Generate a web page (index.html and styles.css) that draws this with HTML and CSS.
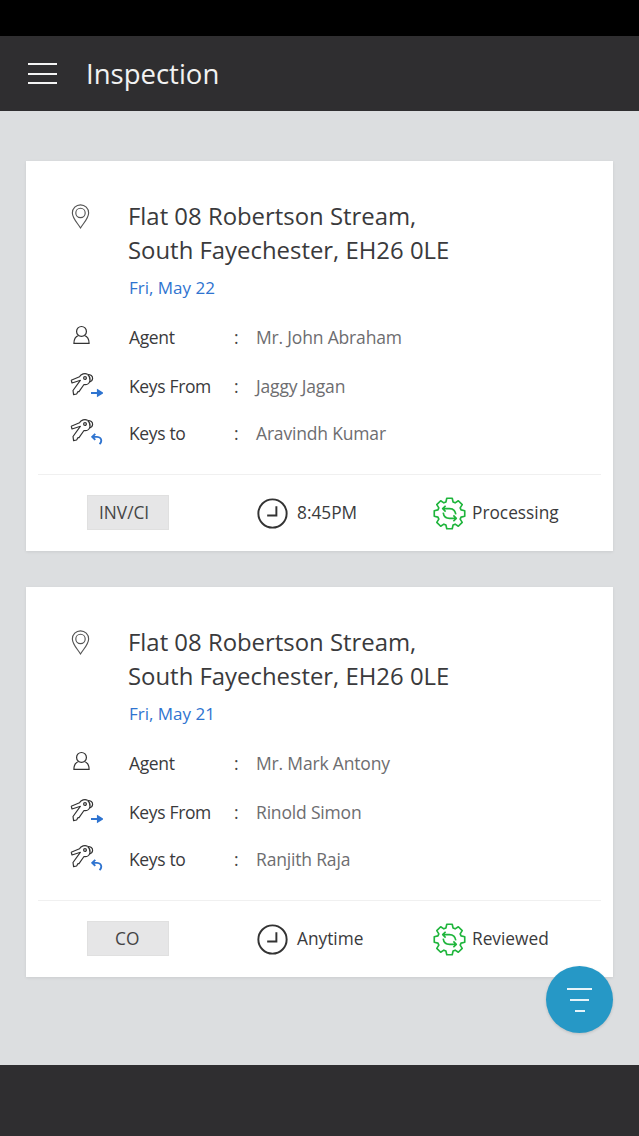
FILE: index.html
```html
<!DOCTYPE html>
<html lang="en">
<head>
<meta charset="utf-8">
<title>Inspection</title>
<link rel="stylesheet" href="styles.css">
</head>
<body>
<svg class="defs" width="0" height="0" aria-hidden="true">
  <symbol id="pin" viewBox="0 0 18 24">
    <path d="M9 23C5.5 17.5 1.2 13.5 1.2 8.6A7.8 7.8 0 0 1 16.8 8.6C16.8 13.5 12.5 17.5 9 23Z" fill="none" stroke="#555" stroke-width="1.1"/>
    <circle cx="9" cy="8.6" r="4.5" fill="none" stroke="#555" stroke-width="1.1"/>
  </symbol>
  <symbol id="person" viewBox="0 0 18 20">
    <circle cx="9" cy="6.2" r="5.2" fill="none" stroke="#333" stroke-width="1.3"/>
    <path d="M6 10.5C2.5 11.5 1 14 1 18.8H17C17 14 15.5 11.5 12 10.5" fill="none" stroke="#333" stroke-width="1.3"/>
  </symbol>
  <symbol id="keys" viewBox="0 0 24 24">
    <g fill="none" stroke="#333" stroke-width="1.2" stroke-linejoin="round">
      <path d="M1.2 8.2L9.5 4.8C11 1.8 15 .8 17.5 2.2M1.2 8.2L2 11L10.5 8.2"/>
      <path d="M10.5 8.2L3 18.5L3.6 22.6L6.6 22L8 19.6L9 19.6L14 12.5C17 13 19.5 11.5 20 8.5C20.3 6 19 3.5 17.5 2.2"/>
      <path d="M18 2.5C20.5 2.5 22.8 4 22.6 6.5C22.4 8.5 21 9.5 19.8 9.8"/>
      <circle cx="15" cy="6" r="1.4"/>
    </g>
  </symbol>
  <symbol id="clock" viewBox="0 0 32 32">
    <circle cx="16" cy="16" r="14.6" fill="none" stroke="#333" stroke-width="2"/>
    <path d="M20 8.5V18H10.5" fill="none" stroke="#333" stroke-width="2"/>
  </symbol>
  <symbol id="gear" viewBox="-17 -17 34 34">
    <g fill="none" stroke="#1fb53c" stroke-width="1.7" stroke-linejoin="round">
      <path d="M-3.7 -11.9L-2.8 -15.7H2.8L3.7 -11.9L5.8 -11L9.1 -13.1L13.1 -9.1L11 -5.8L11.9 -3.7L15.7 -2.8V2.8L11.9 3.7L11 5.8L13.1 9.1L9.1 13.1L5.8 11L3.7 11.9L2.8 15.7H-2.8L-3.7 11.9L-5.8 11L-9.1 13.1L-13.1 9.1L-11 5.8L-11.9 3.7L-15.7 2.8V-2.8L-11.9 -3.7L-11 -5.8L-13.1 -9.1L-9.1 -13.1L-5.8 -11Z"/>
      <path d="M-7 -5H0C3.5 -5 6 -2.5 6.5 1M-4 -8L-7 -5L-4 -2"/>
      <path d="M-6.5 -1C-6 2.5 -3.5 5 0 5H7M4 2L7 5L4 8"/>
    </g>
  </symbol>
</svg>

<div class="statusbar"></div>
<header class="topbar">
  <div class="burger"><span></span><span></span><span></span></div>
  <h1 class="title">Inspection</h1>
</header>

<main class="list">
  <article class="card">
    <div class="details">
      <div class="head">
        <svg class="pin"><use href="#pin"/></svg>
        <div>
          <h2 class="address">Flat 08 Robertson Stream,<br>South Fayechester, EH26 0LE</h2>
          <p class="date">Fri, May 22</p>
        </div>
      </div>
      <div class="row row-agent">
        <svg class="person"><use href="#person"/></svg>
        <span class="label">Agent</span><span class="colon">:</span><span class="value">Mr. John Abraham</span>
      </div>
      <div class="row row-from">
        <span class="keyicon"><svg class="keys"><use href="#keys"/></svg><svg class="mini" viewBox="0 0 14 10"><path d="M0 5H8M8 2L13 5L8 8Z" fill="#2f74d0" stroke="#2f74d0" stroke-width="2.2"/></svg></span>
        <span class="label">Keys From</span><span class="colon">:</span><span class="value">Jaggy Jagan</span>
      </div>
      <div class="row row-to">
        <span class="keyicon"><svg class="keys"><use href="#keys"/></svg><svg class="mini" viewBox="0 0 14 14"><path d="M5 1L1.5 4.5L5 8M2 4.5H7C10.5 4.5 12 7 12 9C12 11 11 12 10 13" fill="none" stroke="#2f74d0" stroke-width="2.2"/></svg></span>
        <span class="label">Keys to</span><span class="colon">:</span><span class="value">Aravindh Kumar</span>
      </div>
    </div>
    <div class="foot">
      <span class="chip">INV/CI</span>
      <span class="time"><svg class="clock"><use href="#clock"/></svg><span class="foot-text">8:45PM</span></span>
      <span class="status"><svg class="gear"><use href="#gear"/></svg><span class="foot-text">Processing</span></span>
    </div>
  </article>

  <article class="card">
    <div class="details">
      <div class="head">
        <svg class="pin"><use href="#pin"/></svg>
        <div>
          <h2 class="address">Flat 08 Robertson Stream,<br>South Fayechester, EH26 0LE</h2>
          <p class="date">Fri, May 21</p>
        </div>
      </div>
      <div class="row row-agent">
        <svg class="person"><use href="#person"/></svg>
        <span class="label">Agent</span><span class="colon">:</span><span class="value">Mr. Mark Antony</span>
      </div>
      <div class="row row-from">
        <span class="keyicon"><svg class="keys"><use href="#keys"/></svg><svg class="mini" viewBox="0 0 14 10"><path d="M0 5H8M8 2L13 5L8 8Z" fill="#2f74d0" stroke="#2f74d0" stroke-width="2.2"/></svg></span>
        <span class="label">Keys From</span><span class="colon">:</span><span class="value">Rinold Simon</span>
      </div>
      <div class="row row-to">
        <span class="keyicon"><svg class="keys"><use href="#keys"/></svg><svg class="mini" viewBox="0 0 14 14"><path d="M5 1L1.5 4.5L5 8M2 4.5H7C10.5 4.5 12 7 12 9C12 11 11 12 10 13" fill="none" stroke="#2f74d0" stroke-width="2.2"/></svg></span>
        <span class="label">Keys to</span><span class="colon">:</span><span class="value">Ranjith Raja</span>
      </div>
    </div>
    <div class="foot">
      <span class="chip chip-co">CO</span>
      <span class="time"><svg class="clock"><use href="#clock"/></svg><span class="foot-text">Anytime</span></span>
      <span class="status"><svg class="gear"><use href="#gear"/></svg><span class="foot-text">Reviewed</span></span>
    </div>
  </article>
</main>

<button class="fab" aria-label="Filter"><span></span><span></span><span></span></button>
<footer class="bottombar"></footer>
</body>
</html>
```
FILE: styles.css
```css
* { box-sizing: border-box; }
html, body { margin: 0; padding: 0; }
body {
  position: relative;
  width: 639px;
  height: 1136px;
  overflow: hidden;
  display: flex;
  flex-direction: column;
  background: #dcdee0;
  font-family: "Open Sans", "Noto Sans", sans-serif;
  color: #333;
}
.defs { position: absolute; }
.statusbar { height: 36px; background: #000; flex: none; }
.topbar {
  height: 75px;
  flex: none;
  background: #2f2e30;
  display: flex;
  align-items: center;
  padding-left: 28px;
  gap: 29px;
}
.burger { width: 29px; display: flex; flex-direction: column; gap: 7.5px; }
.burger span { height: 2px; background: #f4f4f4; }
.title { margin: 0; font-size: 27.5px; font-weight: 400; color: #f2f2f2; line-height: 36px; }
.list {
  flex: 1;
  padding: 50px 26px 0;
  display: flex;
  flex-direction: column;
  gap: 36px;
}
.card {
  height: 390px;
  background: #fff;
  box-shadow: 0 1px 3px rgba(0,0,0,.08);
  display: flex;
  flex-direction: column;
}
.details { height: 314px; padding: 38px 0 0 33px; border-bottom: 1px solid #f0f0f0; margin: 0 12px; }
.head { display: flex; }
.pin { width: 19px; height: 25px; margin-top: 5px; margin-right: 38px; flex: none; }
.address { margin: 0; font-size: 23.9px; font-weight: 400; line-height: 34px; color: #3a3a3c; }
.date { margin: 9px 0 0 1px; font-size: 17px; line-height: 24px; color: #2f74d0; }
.row { display: flex; align-items: center; height: 30px; font-size: 17.5px; position: relative; }
.row-agent { margin-top: 22px; }
.row-from { margin-top: 19px; }
.row-to { margin-top: 17px; }
.person { width: 17px; height: 20px; margin: -4px 39px 0 2px; flex: none; }
.keyicon { position: relative; width: 58px; height: 30px; flex: none; }
.keys { position: absolute; left: -1px; top: 1px; width: 24px; height: 24px; }
.mini { position: absolute; left: 20px; top: 16px; width: 12px; height: 12px; }
.row-to .keys { top: 0; }
.row-to .mini { top: 15px; }
.label { width: 105px; color: #3a3a3c; flex: none; letter-spacing: -.02em; }
.colon { width: 22px; color: #444; flex: none; }
.value { color: #6d6d70; letter-spacing: -.01em; }
.foot {
  flex: 1;
  display: flex;
  align-items: center;
  position: relative;
  padding-left: 61px;
  font-size: 17.3px;
  color: #3a3a3c;
}
.foot-text { margin-bottom: 2px; }
.chip {
  width: 82px;
  height: 35px;
  margin-bottom: 2px;
  background: #e6e6e7;
  border: 1px solid #e0e0e0;
  padding-left: 11px;
  line-height: 33px;
  color: #444;
  flex: none;
}
.chip-co { padding-left: 27px; }
.time { display: flex; align-items: center; gap: 9px; width: 176px; margin-left: 88px; flex: none; }
.clock { width: 31px; height: 31px; flex: none; }
.status { display: flex; align-items: center; gap: 6px; }
.gear { width: 33px; height: 33px; flex: none; }
.fab {
  position: absolute;
  left: 546px;
  top: 966px;
  width: 67px;
  height: 67px;
  border: 0;
  border-radius: 50%;
  padding: 0;
  background: #2698c6;
  display: flex;
  flex-direction: column;
  align-items: center;
  justify-content: center;
  gap: 9px;
  box-shadow: 0 1px 3px rgba(0,0,0,.15);
}
.fab span { height: 2px; background: #e6f4fa; width: 25px; }
.fab span:nth-child(2) { width: 19px; }
.fab span:nth-child(3) { width: 10px; }
.bottombar { height: 71px; flex: none; background: #2f2e30; }
```
